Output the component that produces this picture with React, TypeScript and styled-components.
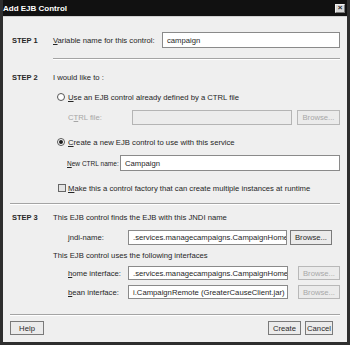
import React from "react";
import styled, { createGlobalStyle } from "styled-components";

const GlobalStyle = createGlobalStyle`
  html, body {
    margin: 0;
    padding: 0;
    background: #ffffff;
  }
  body {
    font-family: "Liberation Sans", Arial, sans-serif;
    font-size: 7.7px;
    color: #262626;
  }
`;

const Window = styled.div`
  width: 350px;
  height: 345px;
  box-sizing: border-box;
  padding: 0 3px 3px 3px;
  background: #2e2e2e;
  display: flex;
  flex-direction: column;
`;

const TitleBar = styled.div`
  height: 16px;
  flex: none;
  display: flex;
  align-items: center;
  justify-content: space-between;
  background: #111111;
  color: #ffffff;
  font-weight: bold;
  font-size: 8px;
`;

const CloseButton = styled.div`
  width: 10px;
  height: 9px;
  margin-right: 2px;
  box-sizing: border-box;
  background: #d6d6d6;
  border: 1px solid #f2f2f2;
  border-right-color: #777;
  border-bottom-color: #777;
  display: flex;
  align-items: center;
  justify-content: center;
  color: #222;
  font-size: 8px;
  line-height: 1;
`;

const Body = styled.div`
  flex: 1;
  background: #efefef;
  border-top: 1px solid #d0d0d0;
  box-sizing: border-box;
  padding: 0 7px 0 7px;
  display: flex;
  flex-direction: column;
`;

const Row = styled.div<{ $top: number; $h: number }>`
  display: flex;
  align-items: center;
  margin-top: ${(p) => p.$top}px;
  height: ${(p) => p.$h}px;
  flex: none;
`;

const StepLabel = styled.div`
  width: 43px;
  flex: none;
  box-sizing: border-box;
  padding-left: 2px;
  font-weight: bold;
  font-size: 7.5px;
`;

const Content = styled.div<{ $indent?: number }>`
  flex: 1;
  display: flex;
  align-items: center;
  height: 100%;
  padding-left: ${(p) => p.$indent ?? 0}px;
`;

const Separator = styled.div<{ $top: number; $inset?: number }>`
  flex: none;
  margin-top: ${(p) => p.$top}px;
  margin-left: ${(p) => p.$inset ?? 0}px;
  height: 0;
  border-top: 1px solid #a4a4a4;
  border-bottom: 1px solid #ffffff;
`;

const Label = styled.span<{ $w?: number; $disabled?: boolean }>`
  flex: none;
  width: ${(p) => (p.$w ? `${p.$w}px` : "auto")};
  color: ${(p) => (p.$disabled ? "#a6a6a6" : "inherit")};
  white-space: nowrap;
`;

const SqueezedText = styled.span<{ $scale: number }>`
  display: inline-block;
  transform: scaleX(${(p) => p.$scale});
  transform-origin: left center;
`;

const Field = styled.div<{ $w?: number; $disabled?: boolean }>`
  ${(p) => (p.$w ? `width: ${p.$w}px; flex: none;` : "flex: 1;")}
  height: 100%;
  box-sizing: border-box;
  border: 1px solid ${(p) => (p.$disabled ? "#b4b4b4" : "#8a8a8a")};
  background: ${(p) => (p.$disabled ? "#ececec" : "#ffffff")};
  display: flex;
  align-items: center;
  padding-left: 4px;
  overflow: hidden;
  white-space: nowrap;
`;

const Button = styled.div<{ $w: number; $gap?: number; $disabled?: boolean }>`
  flex: none;
  width: ${(p) => p.$w}px;
  height: 100%;
  margin-left: ${(p) => p.$gap ?? 0}px;
  box-sizing: border-box;
  border: 1px solid ${(p) => (p.$disabled ? "#b8b8b8" : "#7a7a7a")};
  background: #ebebeb;
  color: ${(p) => (p.$disabled ? "#a8a8a8" : "#2a2a2a")};
  display: flex;
  align-items: center;
  justify-content: center;
  white-space: nowrap;
`;

const Radio = styled.span<{ $checked?: boolean }>`
  flex: none;
  width: 8px;
  height: 8px;
  margin: 0 3px 0 4px;
  box-sizing: border-box;
  border-radius: 50%;
  border: 1px solid #555;
  background: #fff;
  display: flex;
  align-items: center;
  justify-content: center;
  &::after {
    content: "";
    width: 4px;
    height: 4px;
    border-radius: 50%;
    background: ${(p) => (p.$checked ? "#1e1e1e" : "transparent")};
  }
`;

const Checkbox = styled.span`
  flex: none;
  width: 8px;
  height: 8px;
  margin: 0 2px 0 5px;
  box-sizing: border-box;
  border: 1px solid #666;
  background: #e4e4e4;
`;

const ButtonBar = styled.div`
  display: flex;
  align-items: center;
  justify-content: space-between;
  margin-top: 5px;
  height: 14px;
  padding-right: 7px;
  flex: none;
`;

const ButtonGroup = styled.div`
  display: flex;
  height: 100%;
  gap: 4px;
`;

export default function App() {
  return (
    <>
      <GlobalStyle />
      <Window>
        <TitleBar>
          <span>Add EJB Control</span>
          <CloseButton>×</CloseButton>
        </TitleBar>
        <Body>
          <Row $top={15} $h={16}>
            <StepLabel>STEP 1</StepLabel>
            <Content>
              <Label $w={109}>
                <u>V</u>ariable name for this control:
              </Label>
              <Field>campaign</Field>
            </Content>
          </Row>
          <Separator $top={10} $inset={43} />

          <Row $top={10} $h={14}>
            <StepLabel>STEP 2</StepLabel>
            <Content>I would like to :</Content>
          </Row>
          <Row $top={6} $h={14}>
            <StepLabel />
            <Content>
              <Radio />
              <Label>
                <u>U</u>se an EJB control already defined by a CTRL file
              </Label>
            </Content>
          </Row>
          <Row $top={6} $h={15}>
            <StepLabel />
            <Content $indent={15}>
              <Label $w={64} $disabled>
                C<u>T</u>RL file:
              </Label>
              <Field $w={160} $disabled />
              <Button $w={43} $gap={5} $disabled>
                Browse...
              </Button>
            </Content>
          </Row>
          <Row $top={10} $h={14}>
            <StepLabel />
            <Content>
              <Radio $checked />
              <Label>
                <u>C</u>reate a new EJB control to use with this service
              </Label>
            </Content>
          </Row>
          <Row $top={6} $h={16}>
            <StepLabel />
            <Content $indent={14}>
              <Label $w={53}>
                <SqueezedText $scale={0.85}>
                  <u>N</u>ew CTRL name:
                </SqueezedText>
              </Label>
              <Field>Campaign</Field>
            </Content>
          </Row>
          <Row $top={10} $h={14}>
            <StepLabel />
            <Content>
              <Checkbox />
              <Label>
                <u>M</u>ake this a control factory that can create multiple
                instances at runtime
              </Label>
            </Content>
          </Row>
          <Separator $top={8} />

          <Row $top={5} $h={14}>
            <StepLabel>STEP 3</StepLabel>
            <Content>This EJB control finds the EJB with this JNDI name</Content>
          </Row>
          <Row $top={6} $h={15}>
            <StepLabel />
            <Content $indent={15}>
              <Label $w={60}>
                <u>j</u>ndi-name:
              </Label>
              <Field $w={159}>.services.managecampaigns.CampaignHome</Field>
              <Button $w={42} $gap={3}>
                Browse...
              </Button>
            </Content>
          </Row>
          <Row $top={3} $h={14}>
            <StepLabel />
            <Content>This EJB control uses the following interfaces</Content>
          </Row>
          <Row $top={4} $h={14}>
            <StepLabel />
            <Content $indent={15}>
              <Label $w={60}>
                <u>h</u>ome interface:
              </Label>
              <Field $w={160}>.services.managecampaigns.CampaignHome</Field>
              <Button $w={42} $gap={10} $disabled>
                Browse...
              </Button>
            </Content>
          </Row>
          <Row $top={5} $h={14}>
            <StepLabel />
            <Content $indent={15}>
              <Label $w={60}>
                <u>b</u>ean interface:
              </Label>
              <Field $w={160}>i.CampaignRemote (GreaterCauseClient.jar)</Field>
              <Button $w={42} $gap={10} $disabled>
                Browse...
              </Button>
            </Content>
          </Row>
          <Separator $top={15} />

          <ButtonBar>
            <Button $w={34}>Help</Button>
            <ButtonGroup>
              <Button $w={33}>Create</Button>
              <Button $w={28}>Cancel</Button>
            </ButtonGroup>
          </ButtonBar>
        </Body>
      </Window>
    </>
  );
}
